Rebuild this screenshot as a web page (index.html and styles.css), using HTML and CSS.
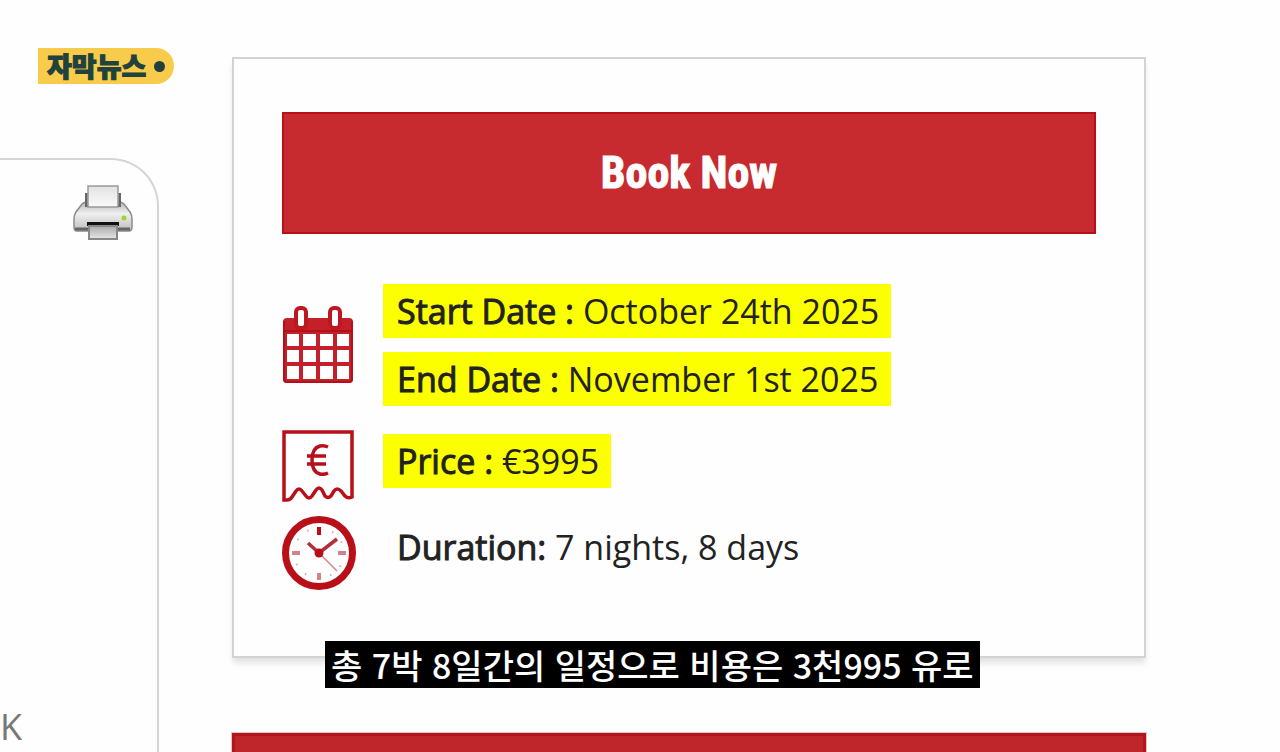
FILE: index.html
```html
<!DOCTYPE html>
<html lang="ko">
<head>
<meta charset="utf-8">
<title>Book Now</title>
<link rel="stylesheet" href="styles.css">
</head>
<body>
<div class="page">
  <aside class="side">
    <div class="badge"><span>자막뉴스</span><i class="badge-dot"></i></div>
    <div class="side-panel">
      <button class="print" type="button" aria-label="Print">
        <svg width="62" height="60" viewBox="0 0 62 60" aria-hidden="true">
          <defs>
            <linearGradient id="body" x1="0" y1="0" x2="0" y2="1"><stop offset="0" stop-color="#b5b5b5"/><stop offset=".4" stop-color="#f0f0f0"/><stop offset="1" stop-color="#bcbcbc"/></linearGradient>
            <linearGradient id="sheet" x1="0" y1="0" x2="0" y2="1"><stop offset="0" stop-color="#e2e2e2"/><stop offset="1" stop-color="#fafafa"/></linearGradient>
            <linearGradient id="tray" x1="0" y1="0" x2="0" y2="1"><stop offset="0" stop-color="#aaa"/><stop offset="1" stop-color="#e6e6e6"/></linearGradient>
          </defs>
          <path d="M10 21q2-2 5-2h32q3 0 5 2l6 8q2 3 2 7v8q0 4-3 4H5q-3 0-3-4v-8q0-4 2-7z" fill="url(#body)" stroke="#8b8b8b" stroke-width="1.5"/>
          <path d="M3 46h14M45 46h13" stroke="#666" stroke-width="3"/>
          <path d="M14 10v13h34V10" fill="#888" stroke="#666" stroke-width="2"/>
          <path d="M16 3h30v21H16z" fill="url(#sheet)" stroke="#999" stroke-width="1.5"/>
          <path d="M15 39h32v4H15z" fill="#111"/>
          <path d="M17 43h28v13H17z" fill="url(#tray)" stroke="#888" stroke-width="2"/>
          <circle cx="52" cy="35" r="2.5" fill="#9bd632"/>
        </svg>
      </button>
      <span class="side-text">K</span>
    </div>
  </aside>

  <main class="main">
    <section class="card">
      <button class="book" type="button">Book Now</button>
      <div class="details">
        <svg class="icon icon-calendar" width="72" height="78" viewBox="0 0 72 78" aria-hidden="true">
          <path d="M5 12h62q4 0 4 4v57q0 4-4 4H5q-4 0-4-4V16q0-4 4-4z" fill="#c4202a"/>
          <path d="M2 25h68M2 15v58q0 3 3 3h62q3 0 3-3V15" fill="none" stroke="#b3101a" stroke-width="2"/>
          <g fill="#fff">
            <path d="M5 28h12v12H5zM21 28h13v12H21zM38 28h13v12H38zM55 28h12v12H55z"/>
            <path d="M5 44h12v12H5zM21 44h13v12H21zM38 44h13v12H38zM55 44h12v12H55z"/>
            <path d="M5 60h12v13H5zM21 60h13v13H21zM38 60h13v13H38zM55 60h12v13H55z"/>
          </g>
          <g fill="#fff" stroke="#bd1822" stroke-width="4"><rect x="14" y="2" width="10" height="20" rx="4"/><rect x="48" y="2" width="10" height="20" rx="4"/></g>
        </svg>
        <div class="lines">
          <p class="line mark"><b>Start Date :</b> October 24th 2025</p>
          <p class="line mark"><b>End Date :</b> November 1st 2025</p>
        </div>

        <svg class="icon" width="72" height="72" viewBox="0 0 72 72" aria-hidden="true">
          <path d="M2 70V2h68v65q-4 2-7-1l-4-5q-4-4-7 0l-3 5q-3 3-6 0l-3-6q-3-4-6 0l-4 6q-3 4-6 0l-4-5q-3-4-6 0l-4 6q-2 3-5 3z" fill="#fff" stroke="#b90f18" stroke-width="3.5"/>
          <path d="M46 17q-4-2-8-1-8 2-8 14t8 14q4 1 8-1M25 26h19M25 34h19" fill="none" stroke="#b90f18" stroke-width="3.5"/>
        </svg>
        <div class="lines lines-single"><p class="line mark"><b>Price :</b> €3995</p></div>

        <svg class="icon" width="74" height="74" viewBox="0 0 74 74" aria-hidden="true">
          <circle cx="37" cy="37" r="33.5" fill="#fff" stroke="#b90f18" stroke-width="7"/>
          <circle cx="37" cy="37" r="25" fill="none" stroke="#d9a3a6" stroke-width="2" stroke-dasharray="1.5 11.59"/>
          <path d="M37 11v8" stroke="#b90f18" stroke-width="4"/>
          <path d="M37 57v7M10 37h8M56 37h8" stroke="#d38388" stroke-width="4"/>
          <path d="M37 37l18 18" stroke="#d38388" stroke-width="1.5"/>
          <path d="M26 27l11 10 18-14" fill="none" stroke="#b3303a" stroke-width="3.5"/>
          <circle cx="37" cy="37" r="4.5" fill="#b90f18"/>
        </svg>
        <div class="lines lines-single"><p class="line"><b>Duration:</b> 7 nights, 8 days</p></div>
      </div>
    </section>
    <section class="next"></section>
  </main>
</div>
<p class="caption">총 7박 8일간의 일정으로 비용은 3천995 유로</p>
</body>
</html>
```
FILE: styles.css
```css
* { box-sizing: border-box; }
body {
  margin: 0;
  background: #fefefe;
  color: #222;
  font-family: "Open Sans", "Noto Sans CJK KR", sans-serif;
}
.page {
  display: grid;
  grid-template-columns: 159px 1fr;
  column-gap: 73px;
  height: 100vh;
  padding-right: 134px;
  overflow: hidden;
}
.side {
  display: flex;
  flex-direction: column;
  gap: 74px;
  padding-top: 48px;
}
.badge {
  display: flex;
  align-items: center;
  align-self: flex-start;
  gap: 8px;
  height: 36px;
  margin: 0 -17px 0 38px;
  padding: 0 9px;
  border-radius: 0 18px 18px 0;
  background: #f9cb4b;
  color: #21413f;
  font: 900 27px/36px "Noto Sans CJK KR", sans-serif;
  -webkit-text-stroke: 1px #21413f;
  white-space: nowrap;
}
.badge-dot {
  width: 11px;
  height: 11px;
  border-radius: 50%;
  background: #21413f;
}
.side-panel {
  display: flex;
  flex: 1;
  flex-direction: column;
  justify-content: space-between;
  padding: 23px 23px 0 0;
  border: solid #d5d5d5;
  border-width: 2px 2px 0 0;
  border-radius: 0 48px 0 0;
}
.print {
  align-self: flex-end;
  padding: 0;
  border: 0;
  background: none;
}
.print svg { display: block; }
.side-text {
  color: #777;
  font-size: 36px;
  line-height: 50px;
}
.main {
  display: flex;
  flex-direction: column;
  gap: 75px;
  padding-top: 57px;
}
.card {
  padding: 53px 48px 66px;
  border: 2px solid #d3d3d3;
  background: #fefefe;
  box-shadow: 0 6px 6px -1px #e2e2e2;
}
.book {
  display: block;
  width: 100%;
  height: 122px;
  padding: 0;
  border: 2px solid #b90f18;
  background: #c82b2f;
  color: #fff;
  font: 700 44px/64px "Roboto Condensed", "Liberation Sans Narrow", Roboto, sans-serif;
  -webkit-text-stroke: 1px #fff;
}
.details {
  display: grid;
  grid-template-columns: 72px 1fr;
  align-items: start;
  gap: 14px 29px;
  margin-top: 50px;
}
.icon {
  display: block;
  overflow: visible;
}
.icon-calendar { margin: 22px 0 32px; }
.lines {
  display: grid;
  justify-self: start;
  row-gap: 14px;
}
.lines-single { padding-top: 4px; }
.line {
  margin: 0;
  padding: 0 12px 0 14px;
  font-size: 34px;
  line-height: 54px;
  white-space: nowrap;
}
.line b {
  font-weight: 400;
  -webkit-text-stroke: 1px #222;
}
.mark { background: #fbff00; }
.next {
  flex: 1;
  border: solid #b3151c;
  border-width: 3px 3px 0;
  outline: 1px solid #dcc8c8;
  background: #bf262c;
}
.caption {
  position: absolute;
  bottom: 64px;
  left: 325px;
  margin: 0;
  padding: 0 6px;
  background: #000;
  color: #fff;
  font: 500 34px/47px "Noto Sans CJK KR", sans-serif;
  white-space: nowrap;
}
```
